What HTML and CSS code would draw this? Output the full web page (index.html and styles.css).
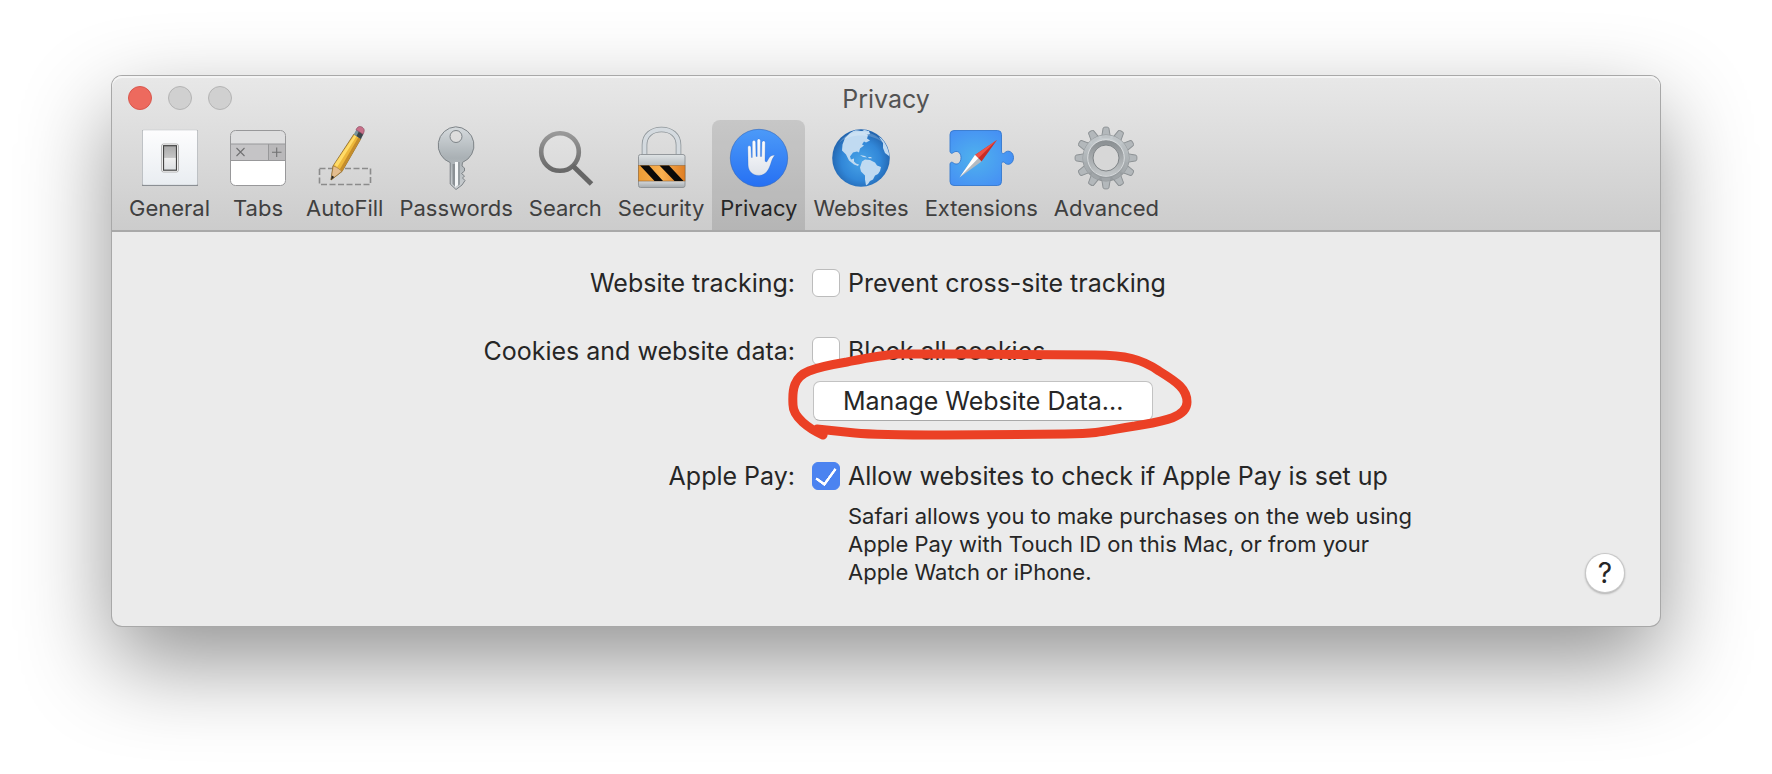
FILE: index.html
```html
<!DOCTYPE html>
<html lang="en">
<head>
    <meta charset="UTF-8">
    <meta name="viewport" content="width=device-width, initial-scale=1.0">
    <title>Privacy</title>
    <link rel="stylesheet" href="styles.css">
</head>
<body>
    <main class="window">
        <header class="toolbar">
            <div class="titlebar">
                <div class="lights">
                    <button type="button" class="light close" aria-label="Close"></button>
                    <button type="button" class="light" aria-label="Minimize" disabled></button>
                    <button type="button" class="light" aria-label="Zoom" disabled></button>
                </div>
                <h1 class="title">Privacy</h1>
            </div>
            <nav class="tabs">
                <button type="button" class="tab">
                    <svg class="icon" viewBox="0 0 64 64">
                        <defs>
                            <linearGradient id="plate" x1="0" y1="0" x2="0" y2="1"><stop offset="0" stop-color="#fdfdfe"/><stop offset="1" stop-color="#e9edf1"/></linearGradient>
                            <linearGradient id="rocker" x1="0" y1="0" x2="0" y2="1"><stop offset="0" stop-color="#aaa"/><stop offset=".48" stop-color="#c4c4c4"/><stop offset=".5" stop-color="#f0f0f0"/><stop offset="1" stop-color="#dcdfe2"/></linearGradient>
                        </defs>
                        <rect x="4" y="4" width="56" height="56" rx="1" fill="#73777c"/>
                        <rect x="4.5" y="4" width="55" height="55" rx="1" fill="url(#plate)" stroke="#c6c9cc" stroke-width=".6"/>
                        <rect x="23.5" y="18" width="17" height="28" rx="2" fill="#fff" stroke="#a5a5a5" stroke-width=".8"/>
                        <rect x="25.5" y="19.7" width="13" height="24.5" fill="url(#rocker)" stroke="#444" stroke-width="1.2"/>
                    </svg>
                    <span>General</span>
                </button>
                <button type="button" class="tab">
                    <svg class="icon" viewBox="0 0 64 64">
                        <rect x="4.5" y="4.5" width="55" height="55" rx="5" fill="#fff"/>
                        <path d="M4.5 18.5V9.5a5 5 0 0 1 5-5h45a5 5 0 0 1 5 5v9z" fill="#dededf"/>
                        <rect x="4.5" y="18" width="55" height="16.5" fill="#c5c4c6"/>
                        <rect x="43" y="18" width="16.5" height="16.5" fill="#b9b8ba"/>
                        <path d="M4.5 18h55M4.5 34.5h55M42.5 18v16.5" stroke="#98989a" stroke-width="1"/>
                        <path d="M10.5 22l8 8M18.5 22l-8 8M46 26.3h9.5M50.7 21.5v9.5" stroke="#707072" stroke-width="1.1"/>
                        <rect x="4.5" y="4.5" width="55" height="55" rx="5" fill="none" stroke="#98989a"/>
                    </svg>
                    <span>Tabs</span>
                </button>
                <button type="button" class="tab">
                    <svg class="icon" viewBox="0 0 64 64">
                        <rect x="6.5" y="42.5" width="51" height="16" fill="none" stroke="#8b8b8b" stroke-width="1.6" stroke-dasharray="6 2.5"/>
                        <path d="M18 54l2-14L41 8l7 4.5-19 33z" fill="#edb83b" stroke="#87652a" stroke-width=".8"/>
                        <path d="M27 43L45.5 11l2.5 1.5-19.2 33.2z" fill="#c58d2b"/>
                        <path d="M21.5 38.5L41.5 9l2 1.2-19.5 31z" fill="#ffdc68"/>
                        <path d="M18 54l2.2-14 3.2 1.2 2 1.3 3.4 2.8z" fill="#e4bd8e" stroke="#87652a" stroke-width=".5"/>
                        <path d="M18 54l.8-4.5 2.5 1.4z" fill="#222"/>
                        <path d="M40.8 8.5l2.6-5 7 4.4-2.6 5z" fill="#77949c"/>
                        <path d="M43.5 10l2.6-5 4.3 2.9-2.6 5z" fill="#3c464b"/>
                        <path d="M43 3.8c1.5-3.5 4-4 6.2-2.6 2.3 1.4 2.7 3.7.8 7z" fill="#c77089" stroke="#8d4c61" stroke-width=".7"/>
                    </svg>
                    <span>AutoFill</span>
                </button>
                <button type="button" class="tab">
                    <svg class="icon" viewBox="0 0 64 64">
                        <defs>
                            <linearGradient id="steel" x1="0" y1="0" x2="0" y2="1"><stop offset="0" stop-color="#d5dadd"/><stop offset=".5" stop-color="#a9b0b4"/><stop offset="1" stop-color="#cdd1d4"/></linearGradient>
                        </defs>
                        <path d="M31.7.8a18.5 18.5 0 0 0-5.5 35.8V58l5.8 5.5 6-4.5 3-4.5-2.5-2.5 2-2-3-2.5 3-2.5v-3l-2.5-2 .5-3.6A18.5 18.5 0 0 0 31.7.8zM32 4.5a6 6 0 1 1 0 12 6 6 0 0 1 0-12z" fill="url(#steel)" fill-rule="evenodd" stroke="#7d8387" stroke-width="1"/>
                        <path d="M28.5 38v20l2.5 2.5V38z" fill="#8b9195"/>
                        <path d="M31 36v25l3-2V36z" fill="#f6f8f9"/>
                        <path d="M34 36v24l2-1.5V36z" fill="#969da1"/>
                    </svg>
                    <span>Passwords</span>
                </button>
                <button type="button" class="tab">
                    <svg class="icon" viewBox="0 0 64 64">
                        <defs>
                            <linearGradient id="lens" x1="0" y1="0" x2="0" y2="1"><stop offset="0" stop-color="#999"/><stop offset="1" stop-color="#686868"/></linearGradient>
                        </defs>
                        <circle cx="27" cy="26" r="18.8" fill="#fff" fill-opacity=".12" stroke="url(#lens)" stroke-width="4.6"/>
                        <path d="M39.5 39.5L58.5 58" stroke="#666" stroke-width="5"/>
                    </svg>
                    <span>Search</span>
                </button>
                <button type="button" class="tab">
                    <svg class="icon" viewBox="0 0 64 64">
                        <defs>
                            <linearGradient id="body" x1="0" y1="0" x2="0" y2="1"><stop offset="0" stop-color="#dfe3e5"/><stop offset=".3" stop-color="#bcc2c6"/><stop offset=".85" stop-color="#c9cdd0"/><stop offset="1" stop-color="#a5aaad"/></linearGradient>
                            <linearGradient id="amber" x1="0" y1="0" x2="1" y2="0"><stop offset="0" stop-color="#eb9c36"/><stop offset=".5" stop-color="#f9b050"/><stop offset="1" stop-color="#df7e24"/></linearGradient>
                        </defs>
                        <path d="M15.5 29V19C15.5 9 23 3.5 32.5 3.5S49.5 9 49.5 19v10" fill="none" stroke="#8d9498" stroke-width="5.6"/>
                        <path d="M15.5 29V19C15.5 9 23 3.5 32.5 3.5S49.5 9 49.5 19v10" fill="none" stroke="#d4dadf" stroke-width="4"/>
                        <rect x="9.5" y="28.5" width="46.5" height="33" rx="2" fill="url(#body)" stroke="#8b9094" stroke-width=".9"/>
                        <rect x="9.5" y="39.5" width="46.5" height="15.5" fill="url(#amber)" stroke="#9b6a35" stroke-width=".6"/>
                        <path d="M11 39.5h9l14 15.5h-8.5zM30.5 39.5h9.5L54.5 55h-9z" fill="#0b0a09"/>
                    </svg>
                    <span>Security</span>
                </button>
                <button type="button" class="tab selected" aria-current="page">
                    <svg class="icon" viewBox="0 0 64 64">
                        <defs>
                            <linearGradient id="blue" x1="0" y1="0" x2="0" y2="1"><stop offset="0" stop-color="#4c9af8"/><stop offset="1" stop-color="#2670f3"/></linearGradient>
                            <linearGradient id="palm" x1="0" y1="0" x2="0" y2="1"><stop offset="0" stop-color="#fff"/><stop offset="1" stop-color="#dfe3ea"/></linearGradient>
                        </defs>
                        <circle cx="32" cy="32" r="28.7" fill="url(#blue)" stroke="#2b64bd" stroke-width=".6"/>
                        <path d="M20.8 21.3c0-2 3-2 3.1 0l.5 10.2h.9V16.2c0-2.2 3.2-2.2 3.3 0l.4 14.3h1.2V14.6c0-2.2 3.2-2.2 3.2 0v15.9h1.2l.4-14c.1-2.1 3.2-2.1 3.2 0L38 35.3l1.7.7 2.5-4.2c1.2-2.2 4-3 5.5-2.2-1.6 1.6-2.6 3.8-3.5 6.5-1.8 6.2-4.6 13.3-12.2 13.3-6.6 0-10.7-4.4-10.9-10.2z" fill="url(#palm)" stroke="#2460be" stroke-opacity=".5" stroke-width=".5"/>
                    </svg>
                    <span>Privacy</span>
                </button>
                <button type="button" class="tab">
                    <svg class="icon" viewBox="0 0 64 64">
                        <defs>
                            <radialGradient id="ocean" cx=".5" cy=".55" r=".52"><stop offset="0" stop-color="#4aa5e8"/><stop offset=".65" stop-color="#3187d8"/><stop offset="1" stop-color="#2366b0"/></radialGradient>
                            <clipPath id="globe"><circle cx="32" cy="32" r="28.3"/></clipPath>
                        </defs>
                        <circle cx="32" cy="32" r="28.8" fill="url(#ocean)"/>
                        <g fill="#c0daf1" clip-path="url(#globe)">
                            <path d="M16 12l5-5 5-3 6 1 6-.5-2 3 3 2-1 3 3 2-4 2-2-1-2 3 2 1-4 3-1 4-2-1-4 1-3 4 1 3 3-1 0 3 2 2 3 1-1 1.5-4-1.5-5-4-3-6-4-4 .5-6z"/>
                            <path d="M34 3.5l6 1.5 1 3-4 1-2-3zM31 29l5 1 2 1.5-4-.5zM39 31l3 0 1 1.2-3 0z"/>
                            <path d="M33 35.5l3-2 5 .5 5 2.5 2 3 4 1.5-1 4-2 3-3 1.5-2 4-3 1.5-2 3-2 1.5-1-6 0-4-4-4-1-4z"/>
                            <path d="M50 11l4 2 4 6 3 9-1 2-4-3-2-5 0-5z"/>
                        </g>
                        <path d="M10 17C18 3 44 1 54 17 44 7 20 7 10 17z" fill="#fff" opacity=".2"/>
                    </svg>
                    <span>Websites</span>
                </button>
                <button type="button" class="tab">
                    <svg class="icon" viewBox="0 0 64 64">
                        <defs>
                            <radialGradient id="piece" cx=".4" cy=".5" r=".6"><stop offset="0" stop-color="#4fb2ed"/><stop offset="1" stop-color="#4690f4"/></radialGradient>
                        </defs>
                        <path d="M5 4.5h43.5a4 4 0 0 1 4 4V25c0 3 2 3.2 3.5 1.5 3-3 8.5-.8 8.5 5.2s-5.5 8.3-8.5 5.3c-1.5-1.7-3.5-1.5-3.5 1.5v17a4 4 0 0 1-4 4H5a4 4 0 0 1-4-4V38c.3-2 2-2.3 3.5-1 3 2.5 7.5.5 7.5-5.3s-4.5-7.7-7.5-5.2C3 27.8 1.3 27.5 1 25.5v-17a4 4 0 0 1 4-4z" fill="url(#piece)" stroke="#3478ce" stroke-width=".9"/>
                        <path d="M48 14L26 29l6.5 6.5z" fill="#c92c26"/>
                        <path d="M48 14L26 29l3.3 3.3z" fill="#ef5247"/>
                        <path d="M10.5 51.5L26 29l6.5 6.5z" fill="#b4bac0"/>
                        <path d="M10.5 51.5L26 29l3.3 3.3z" fill="#fff"/>
                    </svg>
                    <span>Extensions</span>
                </button>
                <button type="button" class="tab">
                    <svg class="icon" viewBox="0 0 64 64">
                        <defs>
                            <path id="tooth" d="M27.5 12l1.7-10c.2-1.2 5.4-1.2 5.6 0l1.7 10z"/>
                            <g id="teeth">
                                <use href="#tooth"/>
                                <use href="#tooth" transform="rotate(30 32 32)"/>
                                <use href="#tooth" transform="rotate(60 32 32)"/>
                                <use href="#tooth" transform="rotate(90 32 32)"/>
                                <use href="#tooth" transform="rotate(120 32 32)"/>
                                <use href="#tooth" transform="rotate(150 32 32)"/>
                                <use href="#tooth" transform="rotate(180 32 32)"/>
                                <use href="#tooth" transform="rotate(210 32 32)"/>
                                <use href="#tooth" transform="rotate(240 32 32)"/>
                                <use href="#tooth" transform="rotate(270 32 32)"/>
                                <use href="#tooth" transform="rotate(300 32 32)"/>
                                <use href="#tooth" transform="rotate(330 32 32)"/>
                            </g>
                            <linearGradient id="gear" x1="0" y1="0" x2="0" y2="1"><stop offset="0" stop-color="#c6cccf"/><stop offset="1" stop-color="#969b9e"/></linearGradient>
                            <linearGradient id="ring" x1="0" y1="0" x2="0" y2="1"><stop offset="0" stop-color="#8c9194"/><stop offset="1" stop-color="#c0c4c6"/></linearGradient>
                        </defs>
                        <use href="#teeth" fill="#b3b8bb" stroke="#858a8d" stroke-width="1"/>
                        <circle cx="32" cy="32" r="18" fill="none" stroke="#858a8d" stroke-width="11"/>
                        <circle cx="32" cy="32" r="18" fill="none" stroke="url(#gear)" stroke-width="10"/>
                        <use href="#teeth" fill="#b3b8bb" opacity=".35"/>
                        <circle cx="32" cy="32" r="15.5" fill="none" stroke="url(#ring)" stroke-width="5"/>
                        <circle cx="32" cy="32" r="18.3" fill="none" stroke="#d9dcde" stroke-width="1"/>
                        <circle cx="32" cy="32" r="13" fill="#d7d7d7" stroke="#7f8487" stroke-width="1"/>
                    </svg>
                    <span>Advanced</span>
                </button>
            </nav>
        </header>

        <form class="settings">
            <div class="label">Website tracking:</div>
            <div class="field">
                <label class="option"><input type="checkbox" class="check">Prevent cross-site tracking</label>
            </div>

            <div class="label">Cookies and website data:</div>
            <div class="field">
                <label class="option"><input type="checkbox" class="check">Block all cookies</label>
                <div class="manage">
                    <button type="button" class="manage-button">Manage Website Data...</button>
                    <svg class="marker" viewBox="0 0 412 100">
                        <path d="M38 90C24 84 8 72 8 60C7 44 9 32 24 26C34 22 50 19 62 17C82 13 96 10 114 9L180 9L310 10C340 10 357 14 374 26C392 37 402 44 402 57C402 74 372 77 350 81C318 86 320 88 280 89L160 90C120 90 90 90 70 88L32 84"/>
                    </svg>
                </div>
            </div>

            <div class="label">Apple Pay:</div>
            <div class="field">
                <label class="option"><input type="checkbox" class="check" checked>Allow websites to check if Apple Pay is set up</label>
                <p class="note">Safari allows you to make purchases on the web using Apple Pay with Touch ID on this Mac, or from your Apple&nbsp;Watch or iPhone.</p>
            </div>
            <button type="button" class="help" aria-label="Help">?</button>
        </form>
    </main>
</body>
</html>
```
FILE: styles.css
```css
* {
    box-sizing: border-box;
}
body {
    margin: 0;
    padding: 76px 112px 148px;
    background: #fff;
    color: #262626;
    font-family: Inter, "Liberation Sans", sans-serif;
    font-size: 25px;
    line-height: 28px;
}
button {
    margin: 0;
    padding: 0;
    border: 0;
    font: inherit;
    color: inherit;
}
.window {
    border-radius: 10px;
    background: #ebebeb;
    box-shadow: 0 0 0 1px #a8a8a8, 0 36px 90px rgba(0, 0, 0, 0.43);
}

/* Title bar and tabs */
.toolbar {
    border-bottom: 2px solid #a9a9a9;
    border-radius: 10px 10px 0 0;
    background: linear-gradient(#e8e8e8, #cccccc);
    box-shadow: inset 0 2px 0 #f4f4f4;
}
.titlebar {
    display: grid;
    grid-template-columns: 1fr auto 1fr;
    align-items: center;
    height: 44px;
    padding: 0 16px;
}
.lights {
    display: flex;
    gap: 16px;
}
.light {
    width: 24px;
    height: 24px;
    border: 1px solid #b4b4b4;
    border-radius: 50%;
    background: #d0d0d0;
}
.light.close {
    border-color: #d9574d;
    background: #ed6a5e;
}
.title {
    margin: 0;
    padding-top: 2px;
    color: #535353;
    font-size: 25px;
    font-weight: 400;
}
.tabs {
    display: flex;
    padding-left: 9px;
}
.tab {
    display: flex;
    flex-direction: column;
    align-items: center;
    height: 110px;
    padding: 6px 8px 0;
    border-radius: 8px 8px 0 0;
    background: none;
    color: #404040;
    font-size: 22px;
}
.tab.selected {
    background: rgba(0, 0, 0, 0.11);
    color: #262626;
}
.icon {
    flex: none;
    width: 64px;
    height: 64px;
    margin-bottom: 4px;
    overflow: visible;
}

/* Settings */
.settings {
    display: grid;
    grid-template-columns: calc(50% - 91px) 1fr auto;
    row-gap: 40px;
    padding: 37px 0 34px;
}
.label {
    grid-column: 1;
    text-align: right;
}
.field {
    grid-column: 2;
    padding-left: 17px;
}
.option {
    display: flex;
    align-items: center;
    gap: 8px;
}
.check {
    appearance: none;
    width: 28px;
    height: 28px;
    margin: 0;
    border: 1px solid #bcbcbc;
    border-radius: 6px;
    background: #fff;
}
.check:checked {
    display: grid;
    place-items: center;
    border-color: #4b83f0;
    background: #4b83f0;
}
.check:checked::before {
    content: "";
    width: 9px;
    height: 18px;
    margin-bottom: 4px;
    border: solid #fff;
    border-width: 0 3px 3px 0;
    border-radius: 1px;
    transform: rotate(36deg);
}
.manage {
    position: relative;
    width: fit-content;
    margin: 16px 0 1px 1px;
}
.manage-button {
    height: 40px;
    padding: 0 29px;
    border: 1px solid #c2c2c2;
    border-bottom-color: #a9a9a9;
    border-radius: 7px;
    background: #fff;
}
.marker {
    position: absolute;
    top: -36px;
    left: -28px;
    width: 412px;
    height: 100px;
    fill: none;
    stroke: #eb4025;
    stroke-width: 9;
    stroke-linecap: round;
    stroke-linejoin: round;
    pointer-events: none;
}
.note {
    max-width: 620px;
    margin: 12px 0 0;
    padding: 0 0 6px 36px;
    font-size: 22px;
}
.help {
    grid-column: 3;
    align-self: end;
    width: 38px;
    height: 38px;
    margin-right: 36px;
    border-radius: 50%;
    background: #fff;
    box-shadow: 0 0 0 1px #c8c8c8, 0 1px 2px 1px rgba(0, 0, 0, 0.25);
    font-size: 28px;
}
```
